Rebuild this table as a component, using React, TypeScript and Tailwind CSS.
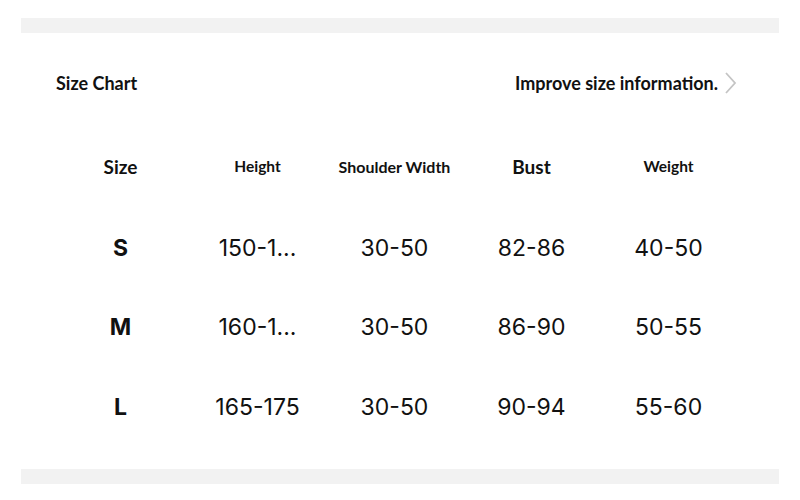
const headers = [
  { label: "Size", cls: "text-[19px]" },
  { label: "Height", cls: "text-[15.5px]" },
  { label: "Shoulder Width", cls: "text-[16px]" },
  { label: "Bust", cls: "text-[19px]" },
  { label: "Weight", cls: "text-[15.5px]" },
];

const rows = [
  ["S", "150-1...", "30-50", "82-86", "40-50"],
  ["M", "160-1...", "30-50", "86-90", "50-55"],
  ["L", "165-175", "30-50", "90-94", "55-60"],
];

const App = () => {
  return (
    <div className="w-[800px] h-[500px] bg-white pt-[18px] px-[21px] text-[#111]">
      <div className="h-[15px] bg-[#f2f2f2]" />

      <div className="flex items-center justify-between pl-[35px] pr-[41px] mt-[38px] h-[24px] font-['Lato',sans-serif] font-bold">
        <span className="text-[18px]">Size Chart</span>
        <div className="flex items-center gap-[4px]">
          <span className="text-[18px]">Improve size information.</span>
          <svg width="16" height="24" viewBox="0 0 16 24" fill="none">
            <path d="M4 2 L13 12 L4 22" stroke="#c4c4c4" strokeWidth="1.8" />
          </svg>
        </div>
      </div>

      <div className="pl-[31px] mt-[52px]">
        <div className="grid grid-cols-[137px_137px_137px_137px_137px] h-[40px] items-center font-['Lato',sans-serif] font-bold">
          {headers.map((h) => (
            <div key={h.label} className={`text-center ${h.cls}`}>
              {h.label}
            </div>
          ))}
        </div>

        <div className="mt-[21px] font-['Inter',sans-serif]">
          {rows.map((r) => (
            <div
              key={r[0]}
              className="grid grid-cols-[137px_137px_137px_137px_137px] h-[79.5px] items-center text-[23px]"
            >
              {r.map((c, i) => (
                <div key={i} className={`text-center ${i === 0 ? "font-bold" : ""}`}>
                  {c}
                </div>
              ))}
            </div>
          ))}
        </div>
      </div>

      <div className="h-[15px] bg-[#f2f2f2] mt-[22px]" />
    </div>
  );
};

export default App;
